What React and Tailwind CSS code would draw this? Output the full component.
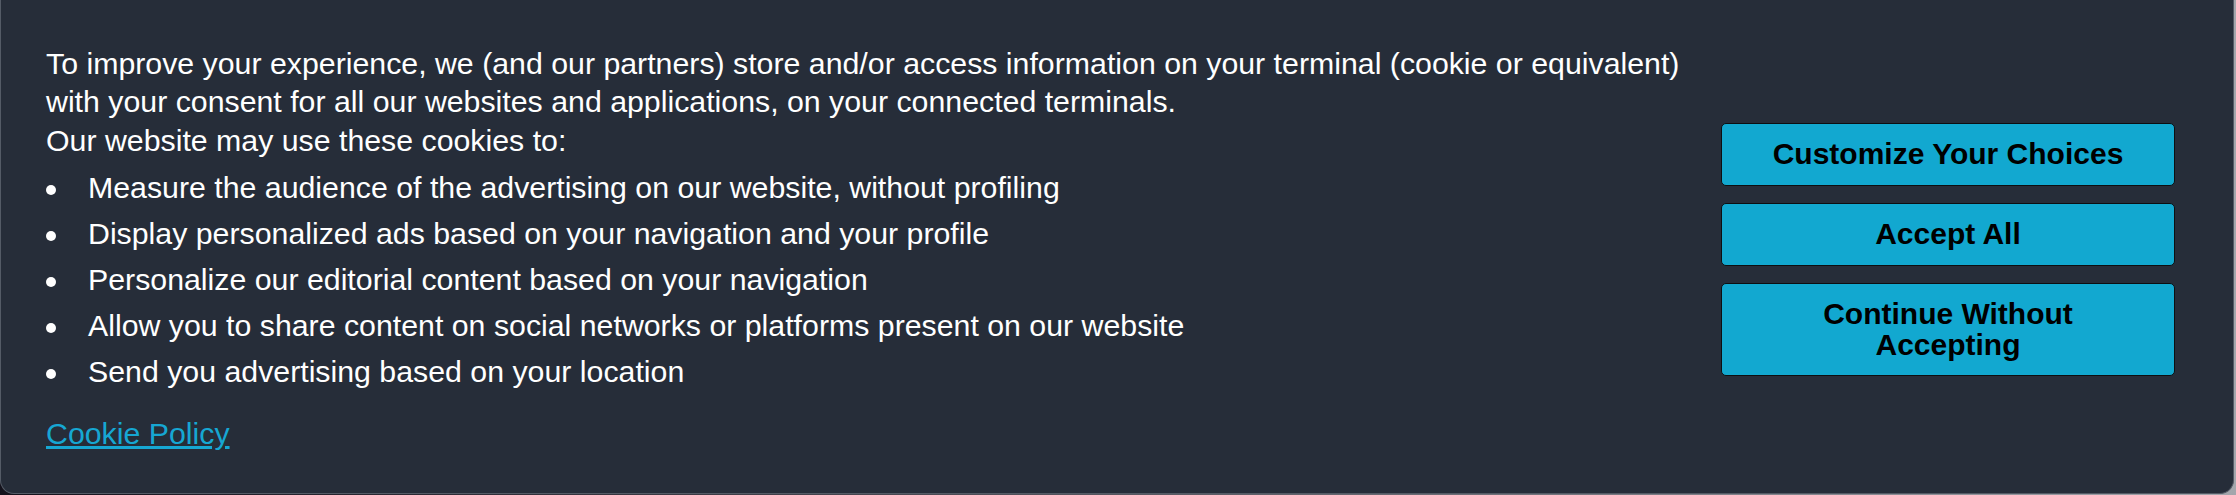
import React from "react";

const items = [
  "Measure the audience of the advertising on our website, without profiling",
  "Display personalized ads based on your navigation and your profile",
  "Personalize our editorial content based on your navigation",
  "Allow you to share content on social networks or platforms present on our website",
  "Send you advertising based on your location",
];

function Btn({ children, tall }) {
  return (
    <button
      className={
        "w-full rounded-[5px] border border-[#0d0f12] bg-[#12a8d0] px-4 py-[15px] text-center text-[30px] font-bold leading-[30.5px] text-black " +
        (tall ? "h-[93px]" : "h-[63px]")
      }
    >
      {children}
    </button>
  );
}

export default function App() {
  return (
    <div
      className="h-[495px] w-full bg-gradient-to-r from-[#14121c] to-[#a3a6ac] pr-[2px] pb-[1px]"
      style={{ fontFamily: '"Liberation Sans", Arial, Helvetica, sans-serif' }}
    >
      <div className="flex h-[494px] items-center justify-between rounded-b-[14px] border-x border-b border-[#545b66] bg-[#262d39] pt-[46px] pb-[38px] pl-[45px] pr-[58px]">
        <div className="w-[1650px] text-[30.3px] text-white">
          <p className="leading-[38.5px]">
            To improve your experience, we (and our partners) store and/or access information on your terminal (cookie or equivalent) with your consent for all our websites and applications, on your connected terminals.
          </p>
          <p className="leading-[38.5px]">Our website may use these cookies to:</p>
          <ul className="mt-[5px]">
            {items.map((t) => (
              <li key={t} className="flex items-start leading-[46px]">
                <span className="flex w-[42px] shrink-0">
                  <span className="mt-[20px] h-[10px] w-[10px] rounded-full bg-white" />
                </span>
                <span>{t}</span>
              </li>
            ))}
          </ul>
          <a
            href="#"
            className="mt-[20px] inline-block leading-[38.5px] text-[#16a7d3] underline"
          >
            Cookie Policy
          </a>
        </div>
        <div className="mb-[2px] flex w-[454px] flex-col gap-[17px]">
          <Btn>Customize Your Choices</Btn>
          <Btn>Accept All</Btn>
          <Btn tall>
            Continue Without
            <br />
            Accepting
          </Btn>
        </div>
      </div>
    </div>
  );
}
